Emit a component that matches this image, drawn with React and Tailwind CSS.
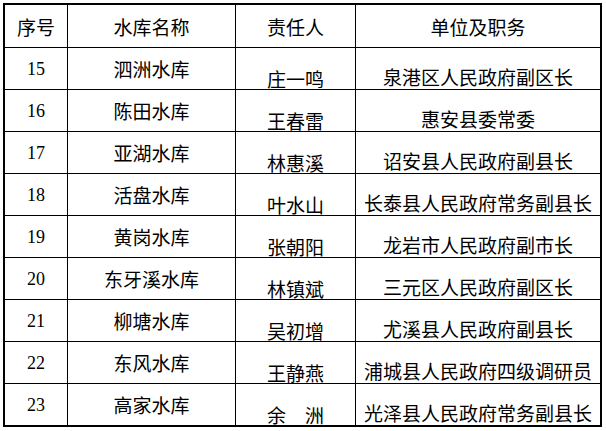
const rows = [
  ['15', '泗洲水库', '庄一鸣', '泉港区人民政府副区长'],
  ['16', '陈田水库', '王春雷', '惠安县委常委'],
  ['17', '亚湖水库', '林惠溪', '诏安县人民政府副县长'],
  ['18', '活盘水库', '叶水山', '长泰县人民政府常务副县长'],
  ['19', '黄岗水库', '张朝阳', '龙岩市人民政府副市长'],
  ['20', '东牙溪水库', '林镇斌', '三元区人民政府副区长'],
  ['21', '柳塘水库', '吴初增', '尤溪县人民政府副县长'],
  ['22', '东风水库', '王静燕', '浦城县人民政府四级调研员'],
  ['23', '高家水库', '余\u3000洲', '光泽县人民政府常务副县长'],
];

const cjk = "font-['Noto_Sans_CJK_SC',sans-serif]";
const num = "font-['Liberation_Serif',serif]";

export default function App() {
  return (
    <div className="w-[606px] h-[431px] bg-white pl-[3px] pt-[3px] text-black">
      <div className="w-[599px] border-2 border-black grid grid-cols-[63px_168px_120px_244px]">
        {/* Header */}
        <div className={`h-[43px] border-r border-b border-black flex items-center justify-center text-[19px] leading-none ${cjk}`}>序号</div>
        <div className={`h-[43px] border-r border-b border-black flex items-center justify-center text-[19px] leading-none ${cjk}`}>水库名称</div>
        <div className={`h-[43px] border-r border-b border-black flex items-center justify-center text-[19px] leading-none ${cjk}`}>责任人</div>
        <div className={`h-[43px] border-b border-black flex items-center justify-center text-[19px] leading-none ${cjk}`}>单位及职务</div>

        {rows.map((r, i) => {
          const last = i === rows.length - 1;
          const b = last ? 'h-[41px]' : 'h-[42px] border-b';
          return [
            <div key={i + 'a'} className={`${b} border-r border-black flex items-center justify-center text-[18px] leading-none ${num}`}>{r[0]}</div>,
            <div key={i + 'b'} className={`${b} border-r border-black flex items-center justify-center text-[19px] leading-none ${cjk}`}>{r[1]}</div>,
            <div key={i + 'c'} className={`${b} border-r border-black flex items-end justify-center pb-[1px] text-[19px] leading-none ${cjk}`}>{r[2]}</div>,
            <div key={i + 'd'} className={`${b} border-black flex items-end justify-center pb-[3px] text-[19px] leading-none ${cjk}`}>{r[3]}</div>,
          ];
        })}
      </div>
    </div>
  );
}
